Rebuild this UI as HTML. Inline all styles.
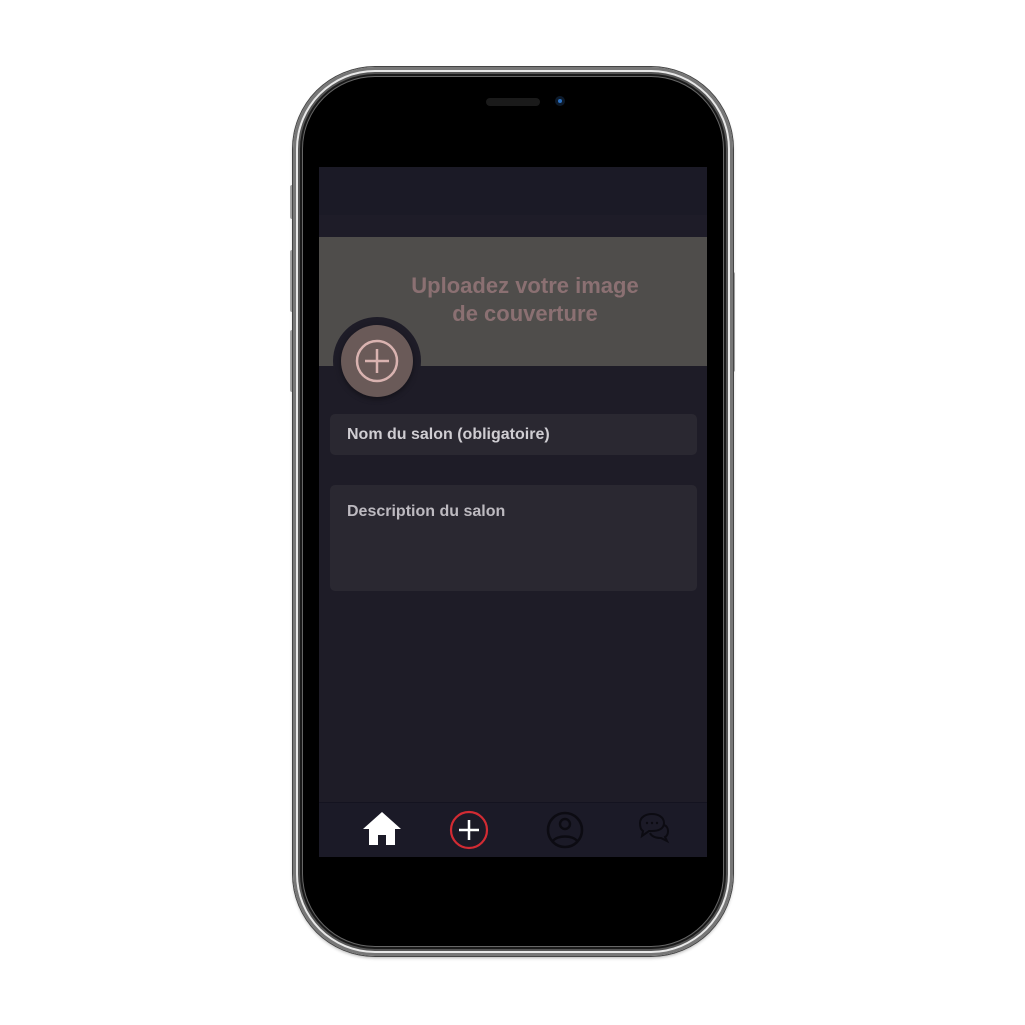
<html><head><style>
body{margin:0;width:1025px;height:1025px;background:#fff;position:relative;overflow:hidden;font-family:"Liberation Sans",sans-serif}
.phone{position:absolute;left:293px;top:67px;width:440px;height:889px;border-radius:82px;background:#1a1a1a;box-shadow:0 0 0 1px #444,inset 0 0 0 3px #777,inset 0 0 0 5px #e8e8e8,inset 0 0 0 7px #555,0 2px 3px rgba(0,0,0,.3)}
.bez{position:absolute;left:10px;top:10px;right:10px;bottom:10px;border-radius:72px;background:#000;box-shadow:0 0 0 1px #666}
.screen{position:absolute;left:319px;top:167px;width:388px;height:690px;background:#1e1c27;overflow:hidden}
.btn{position:absolute;background:#aaa;width:4px;border-radius:2px}
</style></head><body>
<div class="btn" style="left:290px;top:185px;height:34px"></div>
<div class="btn" style="left:290px;top:250px;height:62px"></div>
<div class="btn" style="left:290px;top:330px;height:62px"></div>
<div class="btn" style="left:731px;top:272px;height:100px"></div>
<div class="phone"><div class="bez"></div></div>
<div style="position:absolute;left:486px;top:98px;width:54px;height:8px;border-radius:4px;background:#1a1a1a"></div>
<div style="position:absolute;left:555px;top:96px;width:10px;height:10px;border-radius:5px;background:#0d1a2a"><div style="margin:3px;width:4px;height:4px;border-radius:2px;background:#2a6fc0"></div></div>
<div class="screen">
<div style="height:48px;background:#1b1a26"></div>
<div style="height:22px;background:#1e1c28"></div>
<div style="height:129px;background:#4f4d4b;color:#8b7072;font-weight:bold;font-size:22px;text-align:center;line-height:28px;padding-top:35px;box-sizing:border-box;padding-left:24px">Uploadez votre image<br>de couverture</div>
<div style="position:absolute;left:14px;top:150px;width:88px;height:88px;border-radius:50%;background:#1e1c27"></div>
<div style="position:absolute;left:22px;top:158px;width:72px;height:72px;border-radius:50%;background:#6a5a58;box-shadow:0 2px 6px rgba(0,0,0,.4)">
<svg width="72" height="72"><circle cx="36" cy="36" r="20" fill="none" stroke="#d9b3b0" stroke-width="2.5"/><path d="M36 24v24M24 36h24" stroke="#d9b3b0" stroke-width="2.5"/></svg></div>
<div style="position:absolute;left:11px;top:247px;width:367px;height:41px;border-radius:5px;background:#2a2831;color:#cfcdd2;font-weight:bold;font-size:16px;line-height:41px;padding-left:17px;box-sizing:border-box">Nom du salon (obligatoire)</div>
<div style="position:absolute;left:11px;top:318px;width:367px;height:106px;border-radius:5px;background:#2a2831;color:#bdbac0;font-weight:bold;font-size:16px;padding:18px 17px;box-sizing:border-box">Description du salon</div>
<div style="position:absolute;left:0;top:635px;width:388px;height:55px;background:#1b1a27;border-top:1px solid #141320">
<svg width="388" height="55">
<path d="M63 9L44 26h6v16h9v-10h8v10h9V26h6z" fill="#fff"/>
<circle cx="150" cy="27" r="18" fill="none" stroke="#d22b33" stroke-width="2.2"/><path d="M150 17v20M140 27h20" stroke="#fff" stroke-width="2.5"/>
<circle cx="246" cy="27" r="17" fill="none" stroke="#0c0b12" stroke-width="2.6"/><circle cx="246" cy="21" r="5" fill="none" stroke="#0c0b12" stroke-width="2.4"/><path d="M234 38c4-6 20-6 24 0" fill="none" stroke="#0c0b12" stroke-width="2.4"/>
<path d="M321 20c0-6 6-9 12-9s12 3 12 9-6 8-12 8h-3l-7 5 1-5c-2-1-3-3-3-8z" fill="none" stroke="#0c0b12" stroke-width="2"/><path d="M345 22c3 1 4 4 4 6 0 3-1 5-3 6l2 4-6-3c-5 0-9-1-11-5" fill="none" stroke="#0c0b12" stroke-width="2"/>
<circle cx="328" cy="20" r="1.2" fill="#0c0b12"/><circle cx="333" cy="20" r="1.2" fill="#0c0b12"/><circle cx="338" cy="20" r="1.2" fill="#0c0b12"/>
</svg></div>
</div>
</body></html>
